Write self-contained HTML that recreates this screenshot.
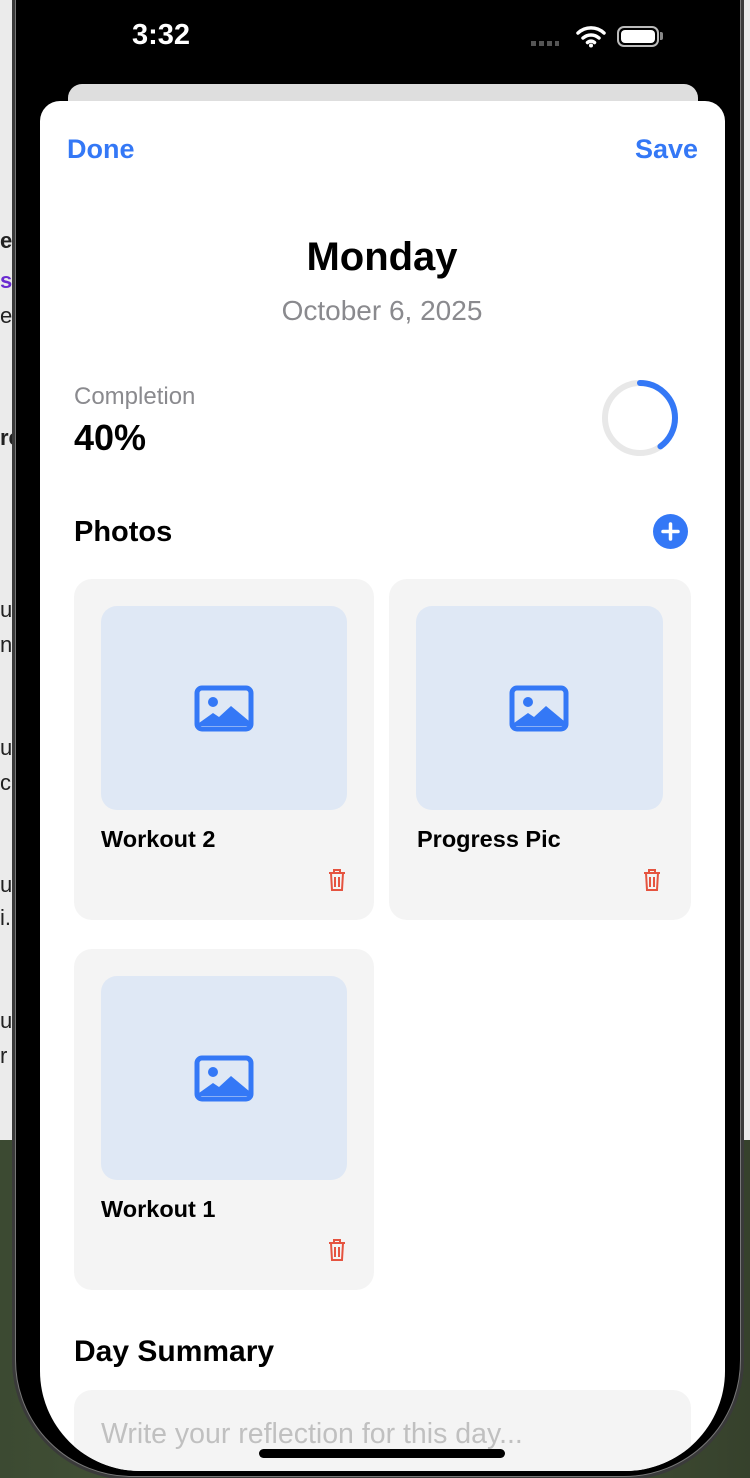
<!DOCTYPE html>
<html><head><meta charset="utf-8"><style>
*{margin:0;padding:0;box-sizing:border-box}
html,body{width:750px;height:1478px;overflow:hidden}
body{position:relative;background:#ebebeb;font-family:"Liberation Sans",sans-serif}
.bgl{position:absolute;left:0;top:1140px;width:750px;height:338px;background:linear-gradient(90deg,#3c4a32,#4d5c3c,#36412c)}
.lt{position:absolute;left:0;font-size:22px;color:#222}
.phone{position:absolute;left:12px;top:-130px;width:732px;height:1610px;border-radius:120px;background:#3a3a3a;padding:3px}
.inner{width:100%;height:100%;border-radius:117px;background:#000;border:1px solid #777;position:relative;overflow:hidden}
.sheetback{position:absolute;left:52px;top:210px;width:630px;height:60px;background:#dedede;border-radius:14px}
.sheet{position:absolute;left:24px;top:227px;width:685px;height:1370px;background:#fff;border-radius:20px 20px 100px 100px;overflow:hidden}
.a{position:absolute;white-space:nowrap}
</style></head><body>
<div class="bgl"></div>
<div class="lt" style="top:228px;font-weight:bold">e</div>
<div class="lt" style="top:268px;color:#6a2bd0;font-weight:bold">s</div>
<div class="lt" style="top:303px">e</div>
<div class="lt" style="top:425px;font-weight:bold">re</div>
<div class="lt" style="top:597px">u</div>
<div class="lt" style="top:632px">n</div>
<div class="lt" style="top:735px">u</div>
<div class="lt" style="top:770px">c</div>
<div class="lt" style="top:872px">u</div>
<div class="lt" style="top:905px">i.</div>
<div class="lt" style="top:1008px">u</div>
<div class="lt" style="top:1043px">r</div>
<div class="phone"><div class="inner">
<div class="a" style="left:116px;top:145px;color:#fff;font-size:29px;font-weight:600">3:32</div>
<div class="a" style="left:515px;top:167px;width:28px;height:5px;background:repeating-linear-gradient(90deg,#555 0 5px,transparent 5px 8px)"></div>
<svg class="a" style="left:559px;top:150px" width="32" height="24" viewBox="0 0 32 24"><path d="M3 9a19 19 0 0 1 26 0M8 14a12 12 0 0 1 16 0M12.5 18.5a5 5 0 0 1 7 0" stroke="#fff" stroke-width="3.5" fill="none" stroke-linecap="round"/><circle cx="16" cy="21.5" r="2" fill="#fff"/></svg>
<div class="a" style="left:601px;top:152px;width:42px;height:21px;border:2px solid #bbb;border-radius:7px;padding:2px"><div style="width:100%;height:100%;background:#fff;border-radius:4px"></div></div>
<div class="a" style="left:644px;top:158px;width:3px;height:8px;background:#888;border-radius:0 2px 2px 0"></div>
<div class="sheetback"></div>
<div class="sheet">
<div class="a" style="left:27px;top:33px;font-size:27px;color:#3478f6;font-weight:600">Done</div>
<div class="a" style="right:27px;top:33px;font-size:27px;color:#3478f6;font-weight:600">Save</div>
<div class="a" style="left:0;width:684px;text-align:center;top:134px;font-size:40px;font-weight:bold;color:#000">Monday</div>
<div class="a" style="left:0;width:684px;text-align:center;top:194px;font-size:28px;color:#8a8a8e">October 6, 2025</div>
<div class="a" style="left:34px;top:282px;font-size:24px;color:#8a8a8e">Completion</div>
<div class="a" style="left:34px;top:316px;font-size:36px;font-weight:bold;color:#000">40%</div>
<svg class="a" style="left:560px;top:277px" width="80" height="80" viewBox="0 0 80 80"><circle cx="40" cy="40" r="35" stroke="#e8e8e8" stroke-width="6" fill="none"/><circle cx="40" cy="40" r="35" stroke="#3478f6" stroke-width="6" fill="none" stroke-linecap="round" stroke-dasharray="88 220" transform="rotate(-90 40 40)"/></svg>
<div class="a" style="left:34px;top:415px;font-size:29px;font-weight:600;color:#000">Photos</div>
<svg class="a" style="left:613px;top:413px" width="35" height="35" viewBox="0 0 35 35"><circle cx="17.5" cy="17.5" r="17.5" fill="#3478f6"/><path d="M17.5 10v15M10 17.5h15" stroke="#fff" stroke-width="3.5" stroke-linecap="round"/></svg>

<div class="a" style="left:34px;top:478px;width:300px;height:341px;background:#f4f4f4;border-radius:18px">
 <div class="a" style="left:27px;top:27px;width:246px;height:204px;background:#dfe8f5;border-radius:16px"></div>
 <svg class="a" style="left:120px;top:106px" width="60" height="47" viewBox="0 0 60 47"><rect x="3" y="3" width="54" height="41" rx="5" stroke="#3478f6" stroke-width="5" fill="none"/><circle cx="19" cy="17" r="5" fill="#3478f6"/><path d="M5 38l14-10 6 4 12-11 18 15v5H5z" fill="#3478f6"/></svg>
 <div class="a" style="left:27px;top:247px;font-size:23.5px;font-weight:600;color:#000">Workout 2</div>
 <svg class="a" style="left:253px;top:289px" width="20" height="24" viewBox="0 0 20 24"><path d="M2 5h16M7 5V2h6v3M4 5l1 17h10l1-17M8 9v10M12 9v10" stroke="#e5533f" stroke-width="2" fill="none"/></svg>
</div>
<div class="a" style="left:349px;top:478px;width:302px;height:341px;background:#f4f4f4;border-radius:18px">
 <div class="a" style="left:27px;top:27px;width:247px;height:204px;background:#dfe8f5;border-radius:16px"></div>
 <svg class="a" style="left:120px;top:106px" width="60" height="47" viewBox="0 0 60 47"><rect x="3" y="3" width="54" height="41" rx="5" stroke="#3478f6" stroke-width="5" fill="none"/><circle cx="19" cy="17" r="5" fill="#3478f6"/><path d="M5 38l14-10 6 4 12-11 18 15v5H5z" fill="#3478f6"/></svg>
 <div class="a" style="left:28px;top:247px;font-size:23.5px;font-weight:600;color:#000">Progress Pic</div>
 <svg class="a" style="left:253px;top:289px" width="20" height="24" viewBox="0 0 20 24"><path d="M2 5h16M7 5V2h6v3M4 5l1 17h10l1-17M8 9v10M12 9v10" stroke="#e5533f" stroke-width="2" fill="none"/></svg>
</div>
<div class="a" style="left:34px;top:848px;width:300px;height:341px;background:#f4f4f4;border-radius:18px">
 <div class="a" style="left:27px;top:27px;width:246px;height:204px;background:#dfe8f5;border-radius:16px"></div>
 <svg class="a" style="left:120px;top:106px" width="60" height="47" viewBox="0 0 60 47"><rect x="3" y="3" width="54" height="41" rx="5" stroke="#3478f6" stroke-width="5" fill="none"/><circle cx="19" cy="17" r="5" fill="#3478f6"/><path d="M5 38l14-10 6 4 12-11 18 15v5H5z" fill="#3478f6"/></svg>
 <div class="a" style="left:27px;top:247px;font-size:23.5px;font-weight:600;color:#000">Workout 1</div>
 <svg class="a" style="left:253px;top:289px" width="20" height="24" viewBox="0 0 20 24"><path d="M2 5h16M7 5V2h6v3M4 5l1 17h10l1-17M8 9v10M12 9v10" stroke="#e5533f" stroke-width="2" fill="none"/></svg>
</div>
<div class="a" style="left:34px;top:1234px;font-size:30px;font-weight:600;color:#000">Day Summary</div>
<div class="a" style="left:34px;top:1289px;width:617px;height:140px;background:#f4f4f4;border-radius:18px">
 <div class="a" style="left:27px;top:28px;font-size:28.5px;color:#c0c0c0">Write your reflection for this day...</div>
</div>
</div>
<div class="a" style="left:243px;top:1575px;width:246px;height:9px;background:#000;border-radius:5px"></div>
</div></div>
</body></html>
